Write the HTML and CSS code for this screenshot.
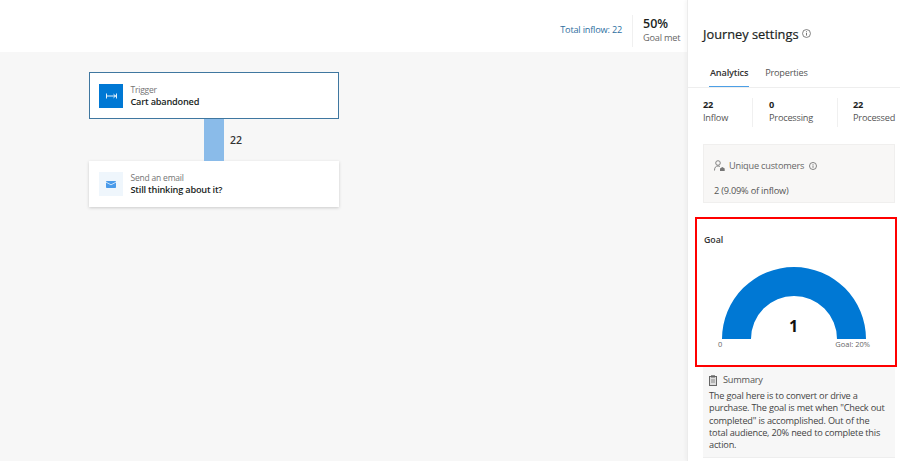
FILE: index.html
```html
<!DOCTYPE html>
<html lang="en">
<head>
<meta charset="utf-8">
<title>Journey settings</title>
<link rel="stylesheet" href="styles.css">
</head>
<body>
<div class="app">
  <main class="main">
    <header class="topbar">
      <span class="inflow">Total inflow: 22</span>
      <div class="goalmet">
        <span class="goalmet-num">50%</span>
        <span class="goalmet-label">Goal met</span>
      </div>
    </header>
    <section class="canvas">
      <div class="card card-trigger">
        <div class="tile tile-solid">
          <svg width="11" height="6" viewBox="0 0 11 6"><path d="M.5 .5v5M10.500 .5v5M.5 3H10M7.500 1.200 9.500 3 7.500 4.800" fill="none" stroke="#fff" stroke-width=".9"/></svg>
        </div>
        <div class="card-text">
          <span class="card-kicker">Trigger</span>
          <span class="card-title">Cart abandoned</span>
        </div>
      </div>
      <div class="link">
        <div class="link-bar"></div>
        <span class="link-num">22</span>
      </div>
      <div class="card card-email">
        <div class="tile tile-light">
          <svg width="10" height="7" viewBox="0 0 10 7"><rect width="10" height="7" rx=".8" fill="#4a9bea"/><path d="M0 1.200 5 3.800 10 1.200" fill="none" stroke="#d5e8fa" stroke-width=".9"/></svg>
        </div>
        <div class="card-text">
          <span class="card-kicker">Send an email</span>
          <span class="card-title">Still thinking about it?</span>
        </div>
      </div>
    </section>
  </main>
  <aside class="panel">
    <div class="panel-head">
      <h1 class="panel-title">Journey settings</h1>
      <svg class="info-lg" width="9" height="9" viewBox="0 0 10 10"><circle cx="5" cy="5" r="4.400" fill="none" stroke="#666" stroke-width=".9"/><path d="M5 4.300v3M5 2.500v1" stroke="#666" stroke-width="1"/></svg>
    </div>
    <nav class="tabs">
      <span class="tab tab-active">Analytics</span>
      <span class="tab">Properties</span>
    </nav>
    <div class="stats">
      <div class="stat stat-a"><b>22</b><span>Inflow</span></div>
      <div class="stat stat-b"><b>0</b><span>Processing</span></div>
      <div class="stat stat-c"><b>22</b><span>Processed</span></div>
    </div>
    <div class="unique">
      <div class="unique-head">
        <svg width="11" height="12" viewBox="0 0 11 12"><circle cx="4" cy="3" r="2.300" fill="none" stroke="#777" stroke-width=".9"/><path d="M.5 10.500c0-3 1.200-4.500 3.500-4.500 .9 0 1.500.2 2 .6" fill="none" stroke="#777" stroke-width=".9"/><path d="M6 11V8.500L8.300 7l2.400 1.500V11z" fill="#777"/></svg>
        <span>Unique customers</span>
        <svg class="info-sm" width="8" height="8" viewBox="0 0 10 10"><circle cx="5" cy="5" r="4.400" fill="none" stroke="#666" stroke-width="1"/><path d="M5 4.300v3M5 2.500v1" stroke="#666" stroke-width="1"/></svg>
      </div>
      <div class="unique-val">2 (9.09% of inflow)</div>
    </div>
    <section class="goal">
      <h2 class="goal-title">Goal</h2>
      <div class="gauge">
        <svg class="gauge-arc" width="144" height="73" viewBox="0 0 144 73"><path d="M0 73A72 72 0 0 1 144 73H115A43 43 0 0 0 29 73z" fill="#0078d4"/></svg>
        <span class="gauge-num">1</span>
      </div>
      <div class="gauge-scale"><span>0</span><span>Goal: 20%</span></div>
    </section>
    <section class="summary">
      <div class="summary-head">
        <svg width="8" height="11" viewBox="0 0 8 11"><rect x=".5" y="1.500" width="7" height="9" fill="#ddd" stroke="#666"/><rect x="2" y=".3" width="4" height="2.200" fill="#666"/><path d="M2 5h4M2 7h4" stroke="#777" stroke-width=".8"/></svg>
        <span>Summary</span>
      </div>
      <p class="summary-text">The goal here is to convert or drive a purchase. The goal is met when "Check out completed" is accomplished. Out of the total audience, 20% need to complete this action.</p>
    </section>
  </aside>
</div>
</body>
</html>
```
FILE: styles.css
```css
* { box-sizing: border-box; }
html, body { margin: 0; height: 100%; }
body {
  width: 900px;
  height: 461px;
  overflow: hidden;
  background: #fff;
  color: #201f1e;
  font-family: "Open Sans", "Noto Sans", "Liberation Sans", sans-serif;
  font-size: 9.200px;
  letter-spacing: -.2px;
}
.app { display: flex; height: 461px; }
.main { width: 687px; display: flex; flex-direction: column; }
.topbar {
  height: 52px;
  display: flex;
  justify-content: flex-end;
  align-items: center;
  padding-right: 7px;
  background: #fff;
}
.inflow { color: #2f6f9f; padding-right: 10px; margin-top: 6px; }
.goalmet {
  display: flex;
  flex-direction: column;
  width: 48px;
  border-left: 1px solid #f0f0f0;
  padding-left: 10px;
  height: 32px;
  margin-top: 9px;
  justify-content: center;
  white-space: nowrap;
}
.goalmet-num { font-size: 12.500px; line-height: 15px; font-weight: 600; letter-spacing: 0; }
.goalmet-label { line-height: 14px; color: #666; }
.canvas {
  flex: 1;
  background: #f7f7f7;
  padding: 20px 0 0 89px;
}
.card {
  width: 250px;
  display: flex;
  align-items: center;
  gap: 8px;
  padding: 0 9px;
  background: #fff;
}
.card-trigger { height: 47px; border: 1.500px solid #3f77a0; gap: 7.500px; }
.card-email { height: 46px; box-shadow: 0 1px 3px rgba(0,0,0,.18); }
.tile {
  width: 24px;
  height: 24px;
  display: flex;
  align-items: center;
  justify-content: center;
  flex: none;
}
.tile-solid { background: #0078d4; }
.tile-light { background: #eff6fc; }
.card-email .tile { margin-left: 0.500px; }
.card-text { display: flex; flex-direction: column; }
.card-kicker { font-size: 8.500px; line-height: 11px; color: #757575; }
.card-title { line-height: 13px; font-weight: 600; color: #201f1e; }
.link { height: 42px; display: flex; align-items: center; padding-left: 115px; gap: 6px; }
.link-bar { width: 20px; height: 42px; background: #8abbe9; }
.link-num { font-size: 10.500px; font-weight: 600; color: #333; letter-spacing: 0; }
.panel {
  width: 213px;
  border-left: 1px solid #ececec;
  box-shadow: -2px 0 3px rgba(0,0,0,.03);
  background: #fff;
  padding-left: 7px;
  position: relative;
}
.panel-head {
  display: flex;
  align-items: center;
  gap: 3px;
  padding: 25px 0 0 8px;
  height: 42px;
}
.panel-title { margin: 0; font-size: 12.800px; line-height: 18px; font-weight: 400; letter-spacing: 0; color: #201f1e; -webkit-text-stroke: .2px #201f1e; }
.info-lg { margin-top: -1px; }
.tabs {
  display: flex;
  gap: 17px;
  height: 46px;
  margin-left: -7px;
  padding: 24px 0 0 22px;
  border-bottom: 1px solid #eeeeee;
}
.tab { line-height: 14px; color: #555; height: 21px; }
.tab-active {
  position: relative;
  color: #333;
  font-weight: 600;
}
.tab-active::after {
  content: "";
  position: absolute;
  left: -1px;
  right: -1px;
  bottom: 0;
  height: 1.500px;
  background: #4c9fe6;
}
.stats { display: flex; height: 29px; margin-top: 10px; padding-left: 8px; overflow: hidden; }
.stat { display: flex; flex-direction: column; flex: none; border-right: 1px solid #f0f0f0; }
.stat:last-child { border-right: 0; }
.stat-a { width: 50px; }
.stat-b { width: 85px; padding-left: 16px; }
.stat-c { padding-left: 15px; }
.stat b { line-height: 13px; font-weight: 700; color: #201f1e; }
.stat span { line-height: 14px; color: #555; }
.unique {
  width: 192px;
  height: 59px;
  margin-top: 17px;
  margin-left: 8px;
  padding: 14px 10px 0;
  background: #f8f7f6;
  border: 1px solid #f0efee;
}
.unique-head { display: flex; align-items: center; gap: 4px; color: #666; line-height: 14px; }
.info-sm { margin-left: 1px; }
.unique-val { line-height: 14px; color: #555; margin-top: 11px; }
.goal {
  width: 202px;
  height: 150px;
  margin-top: 14px;
  margin-left: 0;
  border: 2px solid #f00;
  padding: 15px 7px 0;
}
.goal-title { margin: 0; font-size: 8.800px; line-height: 12px; font-weight: 600; color: #333; letter-spacing: -.05px; }
.gauge { position: relative; width: 144px; height: 73px; margin: 20px 0 0 18px; }
.gauge-arc { display: block; }
.gauge-num {
  position: absolute;
  left: -1px;
  right: 0;
  bottom: 3px;
  text-align: center;
  font-size: 16px;
  line-height: 20px;
  font-weight: 700;
  color: #111;
  letter-spacing: 0;
}
.gauge-scale { display: flex; justify-content: space-between; width: 152px; margin-left: 14px; font-size: 7.500px; line-height: 11px; color: #666; letter-spacing: 0; }
.summary {
  width: 192px;
  margin-left: 8px;
  height: 91px;
  background: #f7f7f7;
  border-bottom: 1px solid #eee;
  padding: 6px 6px 0;
}
.summary-head { display: flex; align-items: center; gap: 6px; line-height: 14px; color: #555; }
.summary-text { margin: 3px 0 0; line-height: 12.300px; color: #444; }
```
